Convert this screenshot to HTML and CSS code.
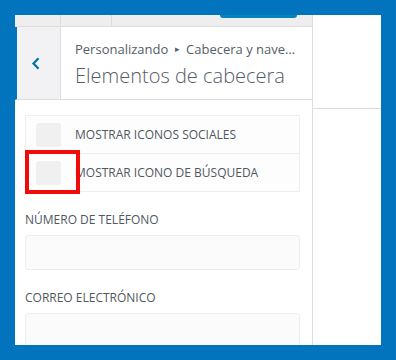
FILE: index.html
```html
<!DOCTYPE html>
<html lang="es">
<head>
<meta charset="utf-8">
<link rel="stylesheet" href="styles.css">
</head>
<body>
<div class="frame">
  <aside class="sidebar">
    <div class="topbar">
      <div class="cell c1"></div>
      <div class="cell c2"></div>
      <div class="spacer"></div>
      <div class="publish"></div>
    </div>
    <div class="header">
      <button class="back" aria-label="Volver">
        <svg width="10" height="13" viewBox="0 0 10 13"><path d="M7.5 1.2 L2.5 6.5 L7.5 11.8" fill="none" stroke="#0073aa" stroke-width="2.2"/></svg>
      </button>
      <div class="titles">
        <div class="crumb">Personalizando <span class="tri">▸</span> Cabecera y nave…</div>
        <div class="title">Elementos de cabecera</div>
      </div>
    </div>
    <div class="content">
      <div class="group">
        <label class="row"><span class="box"></span><span class="rtext">MOSTRAR ICONOS SOCIALES</span></label>
        <label class="row"><span class="box"></span><span class="rtext">MOSTRAR ICONO DE BÚSQUEDA</span></label>
        <div class="highlight"></div>
      </div>
      <div class="field-label">NÚMERO DE TELÉFONO</div>
      <div class="input"></div>
      <div class="field-label">CORREO ELECTRÓNICO</div>
      <div class="input"></div>
    </div>
  </aside>
  <div class="preview">
    <div class="pv-top"></div>
  </div>
</div>
</body>
</html>
```

FILE: styles.css
```css
html, body {
  margin: 0;
  padding: 0;
}
body {
  background: #0273bd;
  width: 396px;
  height: 360px;
  padding: 15px;
  box-sizing: border-box;
  overflow: hidden;
  font-family: "Open Sans", "Noto Sans", sans-serif;
}
.frame {
  width: 366px;
  height: 330px;
  background: #fff;
  display: flex;
  overflow: hidden;
}
.sidebar {
  width: 297px;
  border-right: 1px solid #dddddd;
  display: flex;
  flex-direction: column;
  flex: none;
}
.topbar {
  height: 11px;
  background: #eeeeee;
  border-bottom: 1px solid #dddddd;
  display: flex;
  flex: none;
}
.cell {
  border-right: 1px solid #dddddd;
}
.c1 { width: 45px; }
.c2 { width: 50px; }
.spacer { flex: 1; }
.publish {
  width: 77px;
  height: 3px;
  margin-right: 15px;
  background: #0085ba;
  border-radius: 0 0 3px 3px;
}
.header {
  height: 72px;
  border-bottom: 1px solid #dddddd;
  border-left: 2px solid #0273bd;
  display: flex;
  flex: none;
}
.back {
  width: 44px;
  border: 0;
  border-right: 1px solid #dddddd;
  background: #f2f2f4;
  padding: 0;
  margin: 0;
  display: flex;
  align-items: center;
  justify-content: center;
}
.back svg { display: block; margin-left: -6px; }
.titles {
  flex: 1;
  min-width: 0;
  padding: 12px 12px 0 14px;
  color: #555d66;
}
.crumb {
  font-size: 13px;
  line-height: 20px;
  white-space: nowrap;
}
.tri {
  font-size: 9px;
  position: relative;
  top: -2px;
  padding: 0 3px;
}
.title {
  font-size: 20px;
  font-weight: 300;
  line-height: 28px;
  margin-top: 1px;
  white-space: nowrap;
}
.content {
  padding: 15px 12px 0 10px;
  color: #555d66;
}
.group {
  position: relative;
  border: 1px solid #eeeeee;
  background: #fdfdfd;
}
.row {
  display: flex;
  align-items: center;
  height: 37px;
  padding-left: 10px;
}
.row + .row {
  border-top: 1px solid #eeeeee;
}
.box {
  width: 25px;
  height: 24px;
  border-radius: 3px;
  background: #f0f0f0;
  flex: none;
}
.rtext {
  font-size: 12px;
  margin-left: 14px;
  color: #50575e;
}
.highlight {
  position: absolute;
  left: -1px;
  top: 34px;
  width: 55px;
  height: 44px;
  box-sizing: border-box;
  border: 4px solid #f00a0a;
}
.field-label {
  font-size: 12px;
  line-height: 18px;
  margin-top: 19px;
  margin-bottom: 6px;
  color: #50575e;
}
.input {
  height: 33px;
  border: 1px solid #eeeeee;
  border-radius: 3px;
  background: #fbfbfb;
}
.preview {
  flex: 1;
}
.pv-top {
  height: 93px;
  border-bottom: 1px solid #dddddd;
}
```
